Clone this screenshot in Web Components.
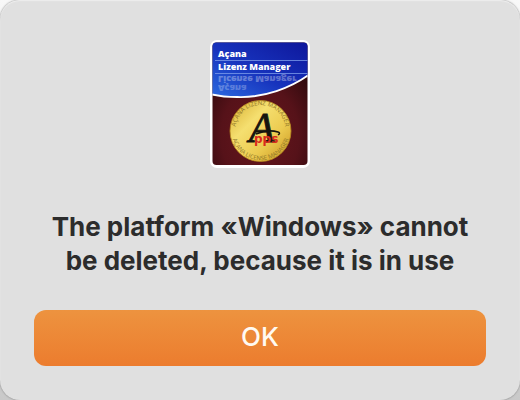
<!DOCTYPE html>
<html lang="en">
<head>
<meta charset="utf-8">
<meta name="viewport" content="width=device-width, initial-scale=1">
<title>Açana Lizenz Manager</title>
<style>
html, body { height: 100%; }
body { margin: 0; background: linear-gradient(#f8f8f8, #c9c9c9); font-family: Inter, "Liberation Sans", sans-serif; }
</style>
</head>
<body>
<alert-dialog>
  <app-icon slot="icon"></app-icon>
  <span>The platform «Windows» cannot be deleted, because it is in use</span>
  <push-button slot="actions">OK</push-button>
</alert-dialog>
<script>
class AlertDialog extends HTMLElement {
  constructor() {
    super();
    this.attachShadow({ mode: "open" }).innerHTML = `
      <style>
        :host { display: block; min-height: 100%; }
        section { box-sizing: border-box; min-height: 100vh; padding: 40px 34px 34px; display: flex; flex-direction: column; align-items: center; background: #e0e0e0; border-radius: 20px; box-shadow: inset 0 1px 1px #eeeeee, 0 0 2px #777777; }
        h1 { margin: 42px 0 32px; max-width: 440px; font-size: 26px; line-height: 34px; font-weight: 700; color: #2c2c2c; text-align: center; }
        footer { width: 100%; }
      </style>
      <section role="alertdialog" aria-labelledby="message">
        <slot name="icon"></slot>
        <h1 id="message"><slot></slot></h1>
        <footer><slot name="actions"></slot></footer>
      </section>`;
  }
}
class PushButton extends HTMLElement {
  constructor() {
    super();
    this.attachShadow({ mode: "open" }).innerHTML = `
      <style>
        :host { display: block; }
        button { display: block; width: 100%; height: 56px; padding: 0 0 2px; border: 0; border-radius: 12px; background: linear-gradient(#ed933f, #ec7c2e); color: #fffaf2; font: 500 26px/54px Inter, "Liberation Sans", sans-serif; }
      </style>
      <button type="button"><slot></slot></button>`;
  }
}
class AppIcon extends HTMLElement {
  constructor() {
    super();
    this.attachShadow({ mode: "open" }).innerHTML = `
      <style>
        :host { display: block; width: 100px; height: 128px; }
        svg { display: block; }
        .title { font: 800 9px "Open Sans", sans-serif; fill: #ffffff; }
        .ring { font: 6px "Open Sans", sans-serif; fill: #8d7526; }
      </style>
      <svg width="100" height="128" viewBox="0 0 100 128" role="img" aria-label="Açana Lizenz Manager">
        <defs>
          <linearGradient id="blue" x1="0" y1="1" x2="1" y2="0"><stop offset="0" stop-color="#2c6be0"/><stop offset=".45" stop-color="#1733bd"/><stop offset="1" stop-color="#0e1599"/></linearGradient>
          <radialGradient id="red" cx=".5" cy=".75" r=".65"><stop offset="0" stop-color="#67161d"/><stop offset=".6" stop-color="#561219"/><stop offset="1" stop-color="#300a0e"/></radialGradient>
          <linearGradient id="gold" x1="0" y1="0" x2="1" y2="1"><stop offset="0" stop-color="#d7ad2e"/><stop offset=".35" stop-color="#f5df70"/><stop offset=".65" stop-color="#eccb50"/><stop offset="1" stop-color="#c7921d"/></linearGradient>
          <clipPath id="card"><rect x="2.500" y="2.500" width="95" height="122.500" rx="4"/></clipPath>
          <path id="upper" d="M25.500 90A25 25 0 0 1 75.500 90"/>
          <path id="lower" d="M21.300 91A29.200 29.200 0 0 0 79.700 91"/>
        </defs>
        <rect width="100" height="128" rx="7" fill="#fff"/>
        <g clip-path="url(#card)">
          <rect width="100" height="128" fill="url(#red)"/>
          <path d="M0 0H100V34C81 48 54 58 27 57Q12 57 0 54Z" fill="url(#blue)"/>
          <path d="M0 54Q12 57 27 57C54 58 81 48 100 34" fill="none" stroke="#fff" stroke-width="1.800"/>
          <path d="M5 20.500H100M5 33.500H100" stroke="#7c9bea" stroke-width=".8"/>
        </g>
        <text class="title" x="8" y="17">Açana</text>
        <text class="title" x="8" y="30">Lizenz Manager</text>
        <g transform="scale(1 -1)" opacity=".32">
          <text class="title" x="8" y="-36">License Manager</text>
          <text class="title" x="8" y="-45" opacity=".8">Açana</text>
        </g>
        <circle cx="50.500" cy="91" r="30.500" fill="url(#gold)" stroke="#b98a20" stroke-width=".8"/>
        <text class="ring"><textPath href="#upper" startOffset="50%" text-anchor="middle">AÇANA LIZENZ MANAGER</textPath></text>
        <text class="ring"><textPath href="#lower" startOffset="50%" text-anchor="middle">AÇANA LICENSE MANAGER</textPath></text>
        <text x="39" y="102" font-family="Liberation Serif, serif" font-style="italic" font-size="42" fill="#16150f" stroke="#16150f" stroke-width=".9">A</text>
        <path d="M46 94Q58 89 68 92Q71 93 68 95" fill="none" stroke="#16150f" stroke-width="1.500"/>
        <text x="44" y="103" font-family="DejaVu Sans, sans-serif" font-weight="700" font-size="12" fill="#d92c1d">pps</text>
      </svg>`;
  }
}
customElements.define("alert-dialog", AlertDialog);
customElements.define("push-button", PushButton);
customElements.define("app-icon", AppIcon);
</script>
</body>
</html>
